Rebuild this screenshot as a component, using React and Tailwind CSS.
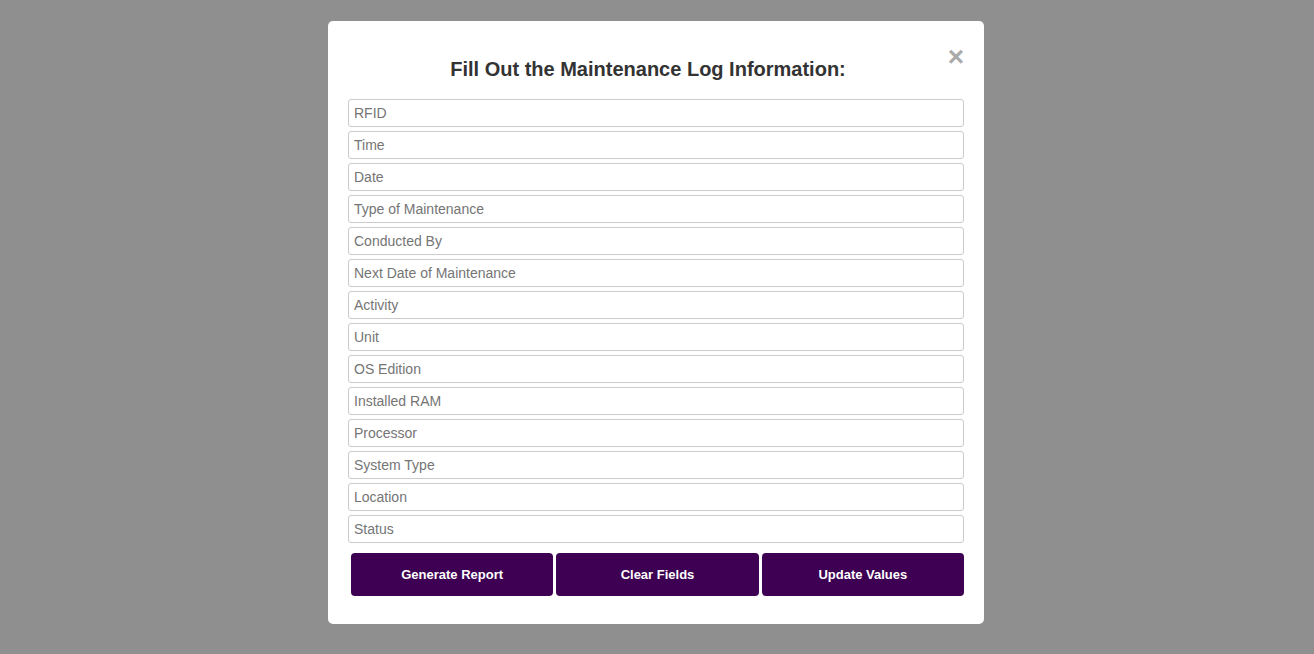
import React from "react";

const fields = [
  "RFID",
  "Time",
  "Date",
  "Type of Maintenance",
  "Conducted By",
  "Next Date of Maintenance",
  "Activity",
  "Unit",
  "OS Edition",
  "Installed RAM",
  "Processor",
  "System Type",
  "Location",
  "Status",
];

function App() {
  return (
    <div className="w-full h-[654px] bg-[#8f8f8f] flex justify-center pr-[2px] pt-[21px] font-['Liberation_Sans',Arial,sans-serif]">
      <div className="relative w-[656px] h-[603px] bg-white rounded-[5px] px-5 pt-[34px]">
        <button className="absolute top-[18px] right-[20px] text-[28px] leading-[36px] font-bold text-[#aaaaaa]">
          ×
        </button>
        <h2 className="text-center text-[20px] leading-[28px] font-bold text-[#333333] mb-4 pr-[16px]">
          Fill Out the Maintenance Log Information:
        </h2>
        <div className="flex flex-col gap-1">
          {fields.map((f) => (
            <input
              key={f}
              type="text"
              placeholder={f}
              className="h-[28px] w-full border border-[#cccccc] rounded-[3px] px-[5px] text-[14px] text-[#333] placeholder:text-[#757575] outline-none"
            />
          ))}
        </div>
        <div className="flex gap-[3px] mt-[10px] ml-[3px]">
          {["Generate Report", "Clear Fields", "Update Values"].map((b) => (
            <button
              key={b}
              className="flex-1 h-[43px] bg-[#3d0052] text-white text-[13px] font-bold rounded-[4px]"
            >
              {b}
            </button>
          ))}
        </div>
      </div>
    </div>
  );
}

export default App;
